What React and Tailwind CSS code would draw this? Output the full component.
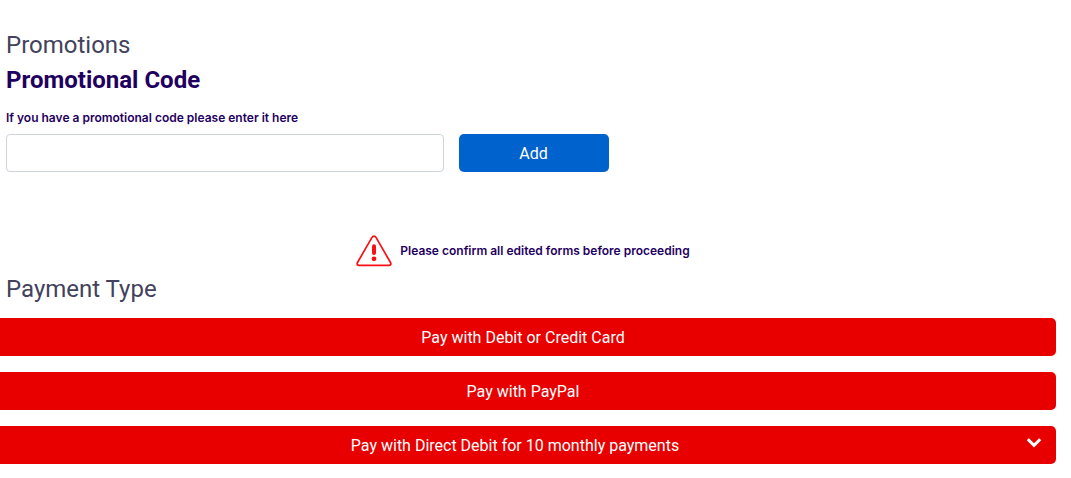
import React, { useState } from 'react';

const WarningIcon = () => (
  <svg width="36" height="32" viewBox="0 0 36 32" fill="none" aria-hidden="true">
    <path
      d="M16 2.4 L1.5 27.5 C0.6 29.2 1.3 30.3 3 30.3 H33 C34.7 30.3 35.4 29.2 34.5 27.5 L20 2.4 C19 0.7 17 0.7 16 2.4 Z"
      stroke="#fa0f14"
      strokeWidth="1.7"
      strokeLinejoin="round"
    />
    <path d="M18 11.2 V18" stroke="#fa0f14" strokeWidth="4" strokeLinecap="round" />
    <circle cx="18" cy="23.8" r="2.4" fill="#fa0f14" />
  </svg>
);

const ChevronIcon = () => (
  <svg width="16" height="12" viewBox="0 0 16 12" fill="none" aria-hidden="true" className="mb-1.5">
    <path d="M1.8 2.2 L8 8.4 L14.2 2.2" stroke="#fff" strokeWidth="3" />
  </svg>
);

const PayButton = ({ children, icon }) => (
  <button
    type="button"
    className="flex h-[38px] w-full items-center rounded-[5px] bg-[#e80000] px-3.5 pt-0.5 text-white hover:bg-[#cc0000]"
  >
    <span className="flex-1 text-center">{children}</span>
    {icon}
  </button>
);

const App = () => {
  const [code, setCode] = useState('');

  return (
    <main className="overflow-hidden bg-white pt-7 pr-[15px] pb-3 pl-1.5 font-['Roboto',sans-serif] text-base">
      {/* Promotions */}
      <section>
        <h2 className="text-2xl leading-[34px] text-[#43425d]">Promotions</h2>
        <h3 className="text-2xl leading-9 font-bold text-[#1f0060]">
          Promotional Code
        </h3>
        <form onSubmit={(e) => e.preventDefault()}>
          <label
            htmlFor="promo-code"
            className="mt-3 mb-2 block font-['Inter',sans-serif] text-xs leading-4 font-semibold text-[#1f0060]"
          >
            If you have a promotional code please enter it here
          </label>
          <div className="flex gap-[15px]">
            <input
              id="promo-code"
              type="text"
              value={code}
              onChange={(e) => setCode(e.target.value)}
              className="h-[38px] w-5/12 rounded border border-[#ced4da] px-3"
            />
            <button
              type="submit"
              className="h-[38px] w-1/7 rounded-[5px] bg-[#0062cc] pt-0.5 text-white hover:bg-[#0056b3]"
            >
              Add
            </button>
          </div>
        </form>
      </section>

      {/* Warning */}
      <div className="mt-[63px] flex items-center justify-center gap-2 pr-4">
        <WarningIcon />
        <p className="font-['Inter',sans-serif] text-xs leading-4 font-semibold text-[#1f0060]">
          Please confirm all edited forms before proceeding
        </p>
      </div>

      {/* Payment options */}
      <section>
        <h2 className="mt-1 text-2xl leading-9 text-[#43425d]">Payment Type</h2>
        <div className="mt-[11px] -ml-4 flex flex-col gap-4">
          <PayButton>Pay with Debit or Credit Card</PayButton>
          <PayButton>Pay with PayPal</PayButton>
          <PayButton icon={<ChevronIcon />}>Pay with Direct Debit for 10 monthly payments</PayButton>
        </div>
      </section>
    </main>
  );
};

export default App;
